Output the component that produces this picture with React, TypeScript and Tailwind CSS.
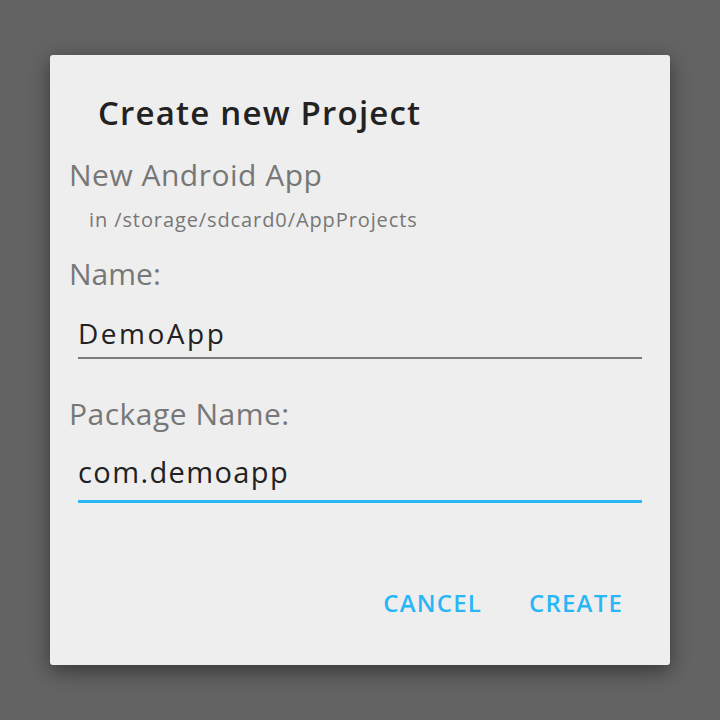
export default function App() {
  return (
    <div className="w-[720px] h-[720px] bg-[#636363] flex items-start justify-center pt-[55px]" style={{ fontFamily: '"Open Sans", Roboto, sans-serif' }}>
      <div className="w-[620px] h-[610px] bg-[#eeeeee] rounded-[3px] shadow-[0_6px_20px_rgba(0,0,0,0.45)] flex flex-col">
        <div className="pl-[48px] mt-[38px] text-[33px] leading-[40px] font-semibold tracking-[1.2px] text-[#222222]">Create new Project</div>
        <div className="pl-[19px] mt-[24px] text-[30px] leading-[36px] tracking-[0.5px] text-[#777777]">New Android App</div>
        <div className="pl-[39px] mt-[14px] text-[20px] leading-[26px] tracking-[0.9px] text-[#777777]">in /storage/sdcard0/AppProjects</div>
        <div className="pl-[19px] mt-[23px] text-[30px] leading-[36px] text-[#777777]">Name:</div>
        <div className="px-[28px] mt-[23px]">
          <div className="text-[28px] leading-[36px] tracking-[2.5px] text-[#222222]">DemoApp</div>
          <div className="mt-[6px] h-[2px] bg-[#7a7a7a]"></div>
        </div>
        <div className="pl-[19px] mt-[37px] text-[30px] leading-[36px] tracking-[0.5px] text-[#777777]">Package Name:</div>
        <div className="px-[28px] mt-[22px]">
          <div className="text-[29px] leading-[36px] tracking-[1.4px] text-[#222222]">com.demoapp</div>
          <div className="mt-[10px] h-[3px] bg-[#29b6f6]"></div>
        </div>
        <div className="flex justify-end gap-[47px] pr-[47px] mt-[86px] text-[24px] leading-[28px] font-semibold tracking-[1.2px] text-[#29b6f6]">
          <span>CANCEL</span>
          <span>CREATE</span>
        </div>
      </div>
    </div>
  );
}
